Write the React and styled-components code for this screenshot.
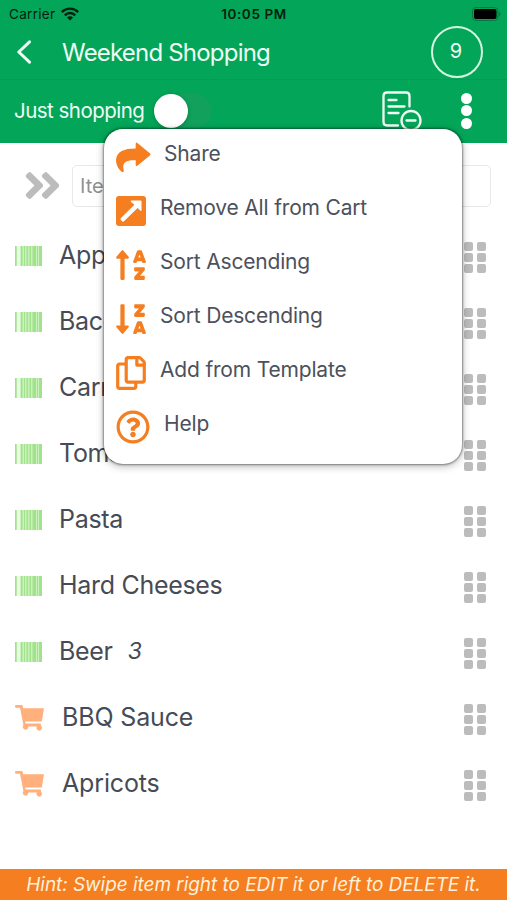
import React from 'react'
import styled, { createGlobalStyle } from "styled-components"
import {
  FaSortAlphaUp,
  FaSortAlphaDownAlt,
  FaRegCopy,
  FaRegQuestionCircle,
  FaAngleDoubleRight,
} from "react-icons/fa"

const GlobalStyle = createGlobalStyle `
  * {
    box-sizing: border-box;
  }

  body {
    margin: 0;
    background: #ffffff;
    font-family: Inter, "Liberation Sans", sans-serif;
  }
`

const Screen = styled.div `
  position: relative;
  display: flex;
  flex-direction: column;
  width: 507px;
  height: 900px;
  overflow: hidden;
  background: #ffffff;
`

const StatusBar = styled.div `
  display: grid;
  grid-template-columns: 1fr auto 1fr;
  align-items: center;
  height: 27px;
  padding: 0 6px 0 9px;
  background: #03a658;
  color: #04200f;
  font-size: 13px;
`

const Carrier = styled.div `
  display: flex;
  align-items: center;
  gap: 6px;
  font-size: 13.5px;
  letter-spacing: 0.3px;
`

const Clock = styled.div `
  position: relative;
  left: -1px;
  font-size: 13.5px;
  font-weight: 600;
  letter-spacing: 0.6px;
`

const Battery = styled.svg `
  justify-self: end;
`

const NavBar = styled.div `
  display: flex;
  align-items: center;
  height: 53px;
  padding: 0 24px 2px 16px;
  background: #03a658;
  border-bottom: 1px solid #049c52;
  color: #ffffff;
`

const Title = styled.div `
  flex: 1;
  padding: 1px 0 0 29px;
  color: #effbf4;
  font-size: 24px;
  letter-spacing: -0.8px;
`

const Counter = styled.div `
  display: flex;
  align-items: center;
  justify-content: center;
  width: 52px;
  height: 52px;
  padding: 0 2px 3px 0;
  border: 2.5px solid #d5f5e0;
  border-radius: 50%;
  color: #effbf4;
  font-size: 20px;
`

const ToolBar = styled.div `
  display: flex;
  align-items: center;
  height: 63px;
  padding: 0 35px 2px 14px;
  background: #03a658;
  color: #effbf4;
`

const ToggleLabel = styled.div `
  width: 140px;
  font-size: 20.5px;
  letter-spacing: -0.52px;
  white-space: nowrap;
`

const Toggle = styled.div `
  width: 58px;
  height: 34px;
  border-radius: 17px;
  background: #12a15c;
`

const Knob = styled.div `
  width: 34px;
  height: 34px;
  border-radius: 50%;
  background: #ffffff;
  box-shadow: 0 1px 4px rgba(0, 60, 20, 0.35);
`

const ToolIcons = styled.div `
  display: flex;
  align-items: center;
  gap: 39px;
  margin-left: auto;
`

const Dots = styled.div `
  display: flex;
  flex-direction: column;
  gap: 1.5px;
`

const Dot = styled.div `
  width: 11px;
  height: 11px;
  border-radius: 50%;
  background: #ffffff;
`

const AddRow = styled.div `
  display: flex;
  align-items: center;
  height: 80px;
  padding: 5px 16px 0 21px;
  gap: 8px;
  color: #bcbcbc;
`

const ItemInput = styled.div `
  flex: 1;
  height: 42px;
  padding-left: 7px;
  border: 1px solid #e8e8e8;
  border-radius: 5px;
  color: #8f9090;
  font-size: 20px;
  line-height: 41px;
`

const Item = styled.div `
  display: flex;
  align-items: center;
  height: 66px;
  padding: 0 21px 0 15px;
  color: #464b56;
`

const ItemIcon = styled.div `
  display: flex;
  width: ${props => props.$cart ? '47px' : '44px'};
  color: #ffb07c;
`

const ItemName = styled.div `
  padding-bottom: 2px;
  font-size: 25px;
  letter-spacing: ${props => props.$cart ? '-0.15px' : '-0.3px'};
`

const Quantity = styled.div `
  margin-left: 15px;
  padding-bottom: 2px;
  font-size: 23px;
  font-style: italic;
`

const Grip = styled.div `
  display: grid;
  grid-template-columns: 9px 9px;
  gap: 2px 4px;
  margin: 2px 0 0 auto;
`

const GripCell = styled.div `
  height: 9px;
  border-radius: 2px;
  background: #bcbcbc;
`

const Hint = styled.div `
  height: 31px;
  margin-top: auto;
  background: #f57e20;
  color: #fff0dc;
  font-size: 19px;
  font-style: italic;
  letter-spacing: -0.05px;
  line-height: 32px;
  text-align: center;
  white-space: nowrap;
`

const Menu = styled.div `
  position: absolute;
  top: 129px;
  left: 104px;
  width: 358px;
  height: 335px;
  padding: 1px 0 0 12px;
  border-radius: 19px;
  background: #ffffff;
  box-shadow: 0 0 2px 1px rgba(0, 0, 0, 0.38), 0 2px 8px rgba(0, 0, 0, 0.3);
`

const MenuItem = styled.div `
  display: flex;
  align-items: center;
  height: 53.9px;
  color: #4c515c;
`

const MenuIcon = styled.div `
  display: flex;
  width: ${props => props.$wide ? '48px' : '44px'};
  padding-top: 1px;
  color: #f57e20;

  svg {
    margin-left: ${props => props.$shift || '0'};
  }
`

const MenuText = styled.div `
  padding-bottom: 6.6px;
  font-size: 21px;
  letter-spacing: -0.18px;
`

const WifiIcon = () => (
  <svg width="18" height="14" viewBox="0 0 18 14" fill="none" stroke="currentColor" strokeWidth="2.4">
    <path d="M.8 5.1C5.4.5 12.6.5 17.2 5.1M3.8 8.3C6.7 5.3 11.3 5.3 14.2 8.3" />
    <path d="M5.9 10.5C7.7 8.7 10.3 8.7 12.1 10.5L9 13.6Z" fill="currentColor" stroke="none" />
  </svg>
)

const BatteryIcon = () => (
  <Battery width="29" height="14" viewBox="0 0 29 14">
    <rect x=".5" y=".5" width="25.5" height="13" rx="3.5" fill="none" stroke="#047a40" />
    <rect x="2" y="2" width="22.5" height="10" rx="2" fill="#000" />
    <path d="M27.2 4.5Q30 7 27.2 9.5Z" fill="#047a40" />
  </Battery>
)

const BackIcon = () => (
  <svg width="17" height="24" viewBox="0 0 17 24" fill="none" stroke="#effbf4" strokeWidth="3" strokeLinecap="round" strokeLinejoin="round">
    <path d="M13.5 1.8L2.8 12L13.5 22.2" />
  </svg>
)

const ListMinusIcon = () => (
  <svg width="40" height="40" viewBox="0 0 40 40" fill="none" stroke="#effbf4" strokeWidth="2.3" strokeLinecap="round">
    <path d="M16 34.5H5Q1.5 34.5 1.5 31V5Q1.5 1.5 5 1.5H24Q27.5 1.5 27.5 5V15.5M6.5 9H14.5M6.5 15.5H22.5M6.5 22H16.5" />
    <circle cx="29" cy="29.5" r="9.5" />
    <path d="M24.5 29.5H33.5" />
  </svg>
)

const BarcodeIcon = () => (
  <svg width="27" height="20" viewBox="0 0 27 20">
    <rect width="27" height="20" fill="#caf1be" />
    <path d="M0 0h1.5v20H0zM6 0h1.5v20H6zM9 0h1v20H9zM11.5 0h1.5v20h-1.5zM14.5 0h1.5v20h-1.5zM17.5 0h3.5v20h-3.5zM22 0h1v20h-1zM24 0h3v20h-3z" fill="#a0e38a" />
    <path d="M2 0h3v20H2z" fill="#eafbe4" />
  </svg>
)

const CartIcon = () => (
  <svg width="30" height="26" viewBox="0 0 30 26" fill="currentColor">
    <path d="M1 0H6.4Q7.5 0 7.7 1L8.2 3.2H29L26.8 16.6H10.2L10.6 18.6H25.8L26 20.8A2.7 2.7 0 1 1 21.8 21.6H13.2A2.7 2.7 0 1 1 8.2 20.6L8.4 19.8L5 2.8H1Q0 2.8 0 1.4Q0 0 1 0Z" />
  </svg>
)

const ShareIcon = () => (
  <svg width="35" height="31" viewBox="0 0 35 31" fill="currentColor">
    <path d="M19.7 2.1Q19.7-.4 21.7 1.2L33.8 11.2Q35.2 12.4 33.8 13.6L21.7 23.4Q19.7 25 19.7 22.5V18.3C9.5 17.7 5.7 21 7.8 28.3Q8.1 31 5.6 29.7C2.2 26.9 0 22.5 0 17.8C.8 9.3 8.5 6.3 19.7 6.4Z" />
  </svg>
)

const ArrowSquareIcon = () => (
  <svg width="30" height="30" viewBox="0 0 30 30">
    <rect width="30" height="30" rx="3" fill="currentColor" />
    <path d="M15.5 4.5H24.5Q25.5 4.5 25.5 5.5V14Q25.5 15.7 24.2 14.5L21.6 11.9L8 25.2Q6.9 26.1 5.9 25.1L4.9 24.1Q4 23.1 5 22L18.4 8.7L15 6Q14 4.5 15.5 4.5Z" fill="#fff" />
  </svg>
)

const menuItems = [
  { text: 'Share', icon: <ShareIcon />, wide: true },
  { text: 'Remove All from Cart', icon: <ArrowSquareIcon /> },
  { text: 'Sort Ascending', icon: <FaSortAlphaUp size={34} />, shift: '-2px' },
  { text: 'Sort Descending', icon: <FaSortAlphaDownAlt size={34} />, shift: '-2px' },
  { text: 'Add from Template', icon: <FaRegCopy size={34} />, shift: '-2px' },
  { text: 'Help', icon: <FaRegQuestionCircle size={34} />, wide: true },
]

const items = [
  { name: 'Apples' },
  { name: 'Bacon' },
  { name: 'Carrots' },
  { name: 'Tomatoes' },
  { name: 'Pasta' },
  { name: 'Hard Cheeses' },
  { name: 'Beer', quantity: 3 },
  { name: 'BBQ Sauce', cart: true },
  { name: 'Apricots', cart: true },
]

const App = () => (
  <>
    <GlobalStyle />
    <Screen>
      <StatusBar>
        <Carrier>Carrier <WifiIcon /></Carrier>
        <Clock>10:05 PM</Clock>
        <BatteryIcon />
      </StatusBar>
      <NavBar>
        <BackIcon />
        <Title>Weekend Shopping</Title>
        <Counter>9</Counter>
      </NavBar>
      <ToolBar>
        <ToggleLabel>Just shopping</ToggleLabel>
        <Toggle><Knob /></Toggle>
        <ToolIcons>
          <ListMinusIcon />
          <Dots><Dot /><Dot /><Dot /></Dots>
        </ToolIcons>
      </ToolBar>
      <AddRow>
        <FaAngleDoubleRight size={43} />
        <ItemInput>Item name</ItemInput>
      </AddRow>
      {items.map(({ name, quantity, cart }) => (
        <Item key={name}>
          <ItemIcon $cart={cart}>{cart ? <CartIcon /> : <BarcodeIcon />}</ItemIcon>
          <ItemName $cart={cart}>{name}</ItemName>
          {quantity && <Quantity>{quantity}</Quantity>}
          <Grip>
            {[0, 1, 2, 3, 4, 5].map(cell => <GripCell key={cell} />)}
          </Grip>
        </Item>
      ))}
      <Hint>Hint: Swipe item right to EDIT it or left to DELETE it.</Hint>
      <Menu>
        {menuItems.map(({ text, icon, wide, shift }) => (
          <MenuItem key={text}>
            <MenuIcon $wide={wide} $shift={shift}>{icon}</MenuIcon>
            <MenuText>{text}</MenuText>
          </MenuItem>
        ))}
      </Menu>
    </Screen>
  </>
)
export default App
